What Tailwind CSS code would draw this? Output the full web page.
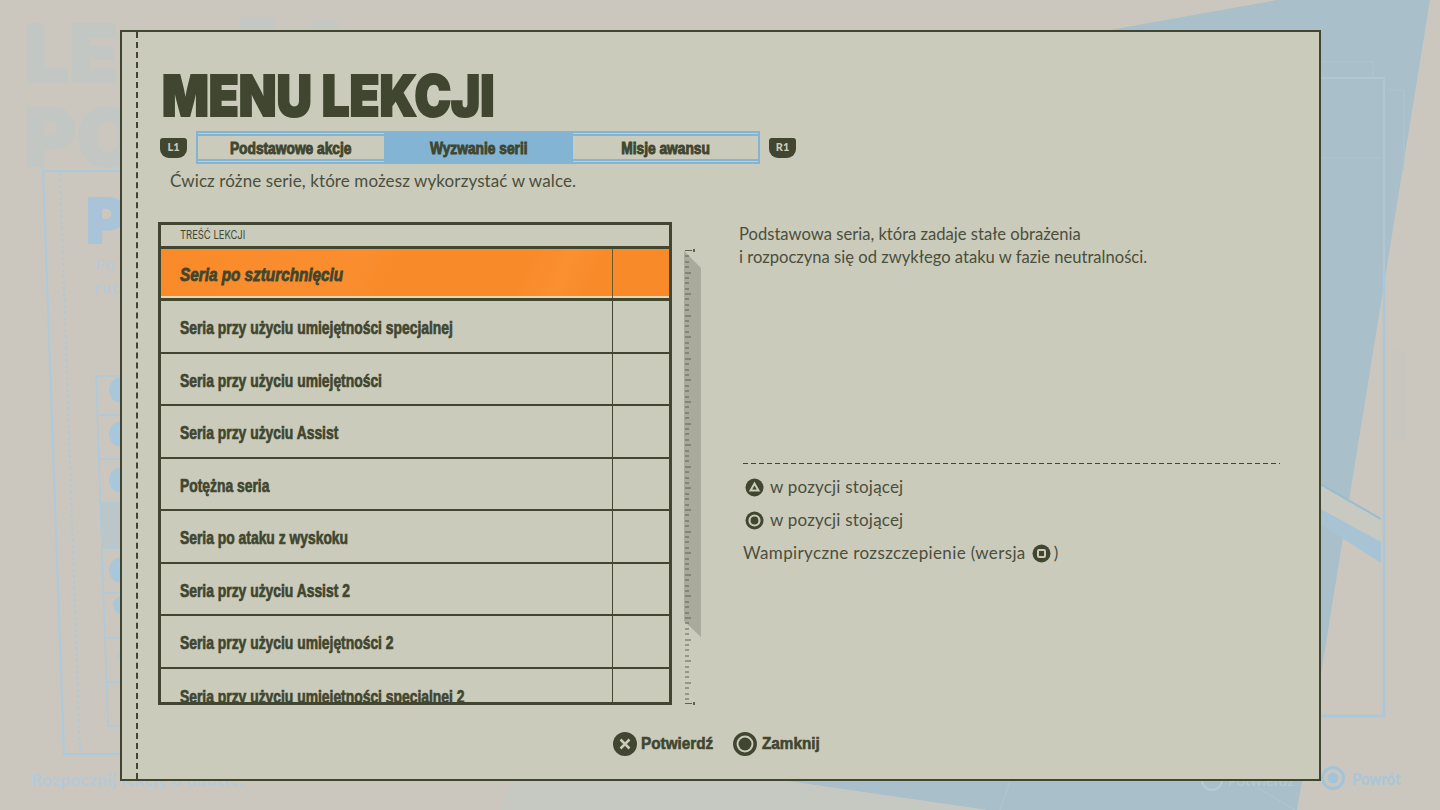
<!DOCTYPE html>
<html lang="pl">

<head>
  <meta charset="UTF-8">
  <title>Menu lekcji</title>
  <script src="https://cdn.jsdelivr.net/npm/@tailwindcss/browser@4"></script>
</head>

<body class="relative w-[1440px] h-[810px] overflow-hidden bg-[#cbc7bf] font-['Lato',sans-serif] text-[#40462f]">
  <!-- dimmed page behind the dialog -->
  <svg class="absolute inset-0" width="1440" height="810" viewBox="0 0 1440 810" fill="none">
    <polygon points="1110,30 1277,0 1430,0 1320,680 1302,781 1297,810 987,810 780,780" fill="#a9bfca" />
    <polygon points="513,780 780,780 987,810 500,810" fill="#c6c8c2" />
    <path d="M1258 788 1295 810M1010 781 1000 810" stroke="#b4c7ce" stroke-width="1" />
    <polygon points="1320,484 1381,519 1381,542 1320,509" fill="#c8c9c0" />
    <polygon points="1320,509 1381,542 1381,563 1320,524" fill="#a8c3d3" />
    <path d="M1320 484 1381 519" stroke="#97bcd2" stroke-width="2" />
    <path d="M1320 78H1384V270" stroke="#b2c7d1" stroke-width="2" />
    <path d="M1384 270V716H1320" stroke="#a9c8db" stroke-width="2.500" />
    <path d="M1320 62H1373V76M1320 158H1380M1389 90H1404V170" stroke="#b0c5cf" stroke-width="1" />
    <rect x="1392" y="350" width="14" height="90" fill="#c8c6bf" />
    <polyline points="121,171 43,171 64,754 121,754" stroke="#abcbdd" stroke-width="2" />
    <polyline points="60,173 80,752" stroke="#abcbdd" stroke-width="2" stroke-dasharray="3 3" />
    <polyline points="121,376 96,376 108,726 121,726" stroke="#abcbdd" stroke-width="1.500" />
    <path d="M98 415H121M100 459H121M101 503H121M103 548H121M104 593H121M105 638H121M106 682H121" stroke="#abcbdd" stroke-width="1.500" />
    <rect x="101" y="504" width="20" height="44" fill="#bbc6c8" />
    <circle cx="122" cy="390" r="13" fill="#a9c7da" />
    <circle cx="122" cy="434" r="13" fill="#a9c7da" />
    <circle cx="122" cy="480" r="13" fill="#a9c7da" />
    <circle cx="122" cy="570" r="13" fill="#a9c7da" />
    <circle cx="122" cy="605" r="9" fill="#a9c7da" />
    <circle cx="122" cy="655" r="5" fill="#b8c9d2" />
    <path d="M240 30V17H275V30M310 30C310 15 340 15 340 30Z" fill="#c4c7c2" />
    <circle cx="1333" cy="778" r="10.500" stroke="#a3c4d8" stroke-width="3" />
    <circle cx="1333" cy="778" r="5.500" fill="#a3c4d8" />
    <circle cx="1212" cy="780" r="10" stroke="#b9cad1" stroke-width="2" />
  </svg>
  <div class="absolute left-[24px] top-[11px] font-['Inter',sans-serif] font-black text-[80px] leading-[84px] text-[#c3c7c3] [-webkit-text-stroke:2px_#c3c7c3]">
    LE<br>PO
  </div>
  <div class="absolute left-[86px] top-[186px] font-['Inter',sans-serif] font-black text-[62px] leading-[70px] text-[#a9c3d8] [-webkit-text-stroke:2px_#a9c3d8]">P</div>
  <div class="absolute left-[95px] top-[252px] text-[16px] leading-[23px] tracking-[1px] text-[#b3cadb]">Po<br>ruc</div>
  <div class="absolute left-[31px] top-[771px] text-[17px] leading-[18px] tracking-[0.4px] font-bold text-[#b3cadb]">Rozpocznij lekcję o dudzie.</div>
  <div class="absolute left-[1352px] top-[770px] text-[16px] leading-[18px] font-black text-[#a9c6d9] origin-left scale-x-[0.92]">Powrót</div>
  <div class="absolute left-[1228px] top-[772px] text-[15px] leading-[16px] text-[#b9cad1]">Potwierdź</div>

  <!-- dialog -->
  <main class="absolute left-[120px] top-[30px] w-[1201px] h-[751px] border-2 border-[#40462f] bg-[#cbcbbb] flex">
    <div class="w-[16px] shrink-0 border-r-2 border-dashed border-[#40462f]"></div>
    <div class="flex-1 flex flex-col pl-[20px] pr-[39px]">
      <h1 class="mt-[30px] ml-[4px] h-[67px] text-[56px] leading-[68px] font-['Inter',sans-serif] font-black [-webkit-text-stroke:2px_#40462f] origin-left scale-x-[0.875] whitespace-nowrap">MENU LEKCJI</h1>

      <div class="flex items-center mt-[2px] ml-[2px]">
        <span class="w-[27px] h-[20px] mr-[9px] rounded-b-[9px] rounded-t-[3px] bg-[#40462f] text-[#cbcbbb] text-[11px] font-black flex items-center justify-center">L1</span>
        <div class="flex w-[564px] h-[33px] border-2 border-[#84b4d3] font-['Liberation_Sans',sans-serif] font-bold text-[16px] [-webkit-text-stroke:0.9px_#40462f]">
          <div class="w-[186px] border-y-2 border-[#84b4d3] my-[1px] pt-[3px] flex items-center justify-center"><span class="scale-x-[0.86] whitespace-nowrap">Podstawowe akcje</span></div>
          <div class="w-[189px] bg-[#84b4d3] pt-[3px] flex items-center justify-center"><span class="scale-x-[0.86] whitespace-nowrap">Wyzwanie serii</span></div>
          <div class="flex-1 border-y-2 border-[#84b4d3] my-[1px] pt-[3px] flex items-center justify-center"><span class="scale-x-[0.86] whitespace-nowrap">Misje awansu</span></div>
        </div>
        <span class="w-[27px] h-[20px] ml-[9px] rounded-b-[9px] rounded-t-[3px] bg-[#40462f] text-[#cbcbbb] text-[11px] font-black flex items-center justify-center">R1</span>
      </div>

      <p class="mt-[5px] ml-[12px] text-[17px] leading-[24px] tracking-[0.1px] text-[#4a4f3c]">Ćwicz różne serie, które możesz wykorzystać w walce.</p>

      <div class="flex mt-[29px]">
        <!-- lesson table -->
        <div class="w-[514px] h-[483px] border-[3px] border-[#40462f] overflow-hidden font-['Liberation_Sans',sans-serif] font-bold text-[19px] [-webkit-text-stroke:0.7px_#40462f]">
          <div class="h-[24px] pl-[19px] flex items-center border-b-[3px] border-[#40462f] font-['Inter',sans-serif] font-normal text-[11.500px] [-webkit-text-stroke:0px]"><span class="scale-x-[0.82] origin-left whitespace-nowrap">TREŚĆ LEKCJI</span></div>
          <div class="h-[52px] flex bg-[linear-gradient(115deg,#f98a2a_0%,#fa8e2e_38%,#f98a2a_45%,#f98a2a_70%,#fa9031_78%,#f98a2a_84%)] border-b-[3px] border-[#40462f] italic shadow-[inset_0_-2px_0_#e8d8b0]">
            <div class="w-[452px] pl-[19px] pt-[4px] flex items-center border-r border-[#6b5a2a]"><span class="scale-x-[0.805] origin-left whitespace-nowrap [-webkit-text-stroke:0.8px_#40462f]">Seria po szturchnięciu</span></div>
          </div>
          <div class="h-[52.500px] flex border-b-2 border-[#40462f]"><div class="w-[452px] pl-[19px] pt-[4px] flex items-center border-r border-[#40462f]"><span class="scale-x-[0.73] origin-left whitespace-nowrap">Seria przy użyciu umiejętności specjalnej</span></div></div>
          <div class="h-[52.500px] flex border-b-2 border-[#40462f]"><div class="w-[452px] pl-[19px] pt-[4px] flex items-center border-r border-[#40462f]"><span class="scale-x-[0.73] origin-left whitespace-nowrap">Seria przy użyciu umiejętności</span></div></div>
          <div class="h-[52.500px] flex border-b-2 border-[#40462f]"><div class="w-[452px] pl-[19px] pt-[4px] flex items-center border-r border-[#40462f]"><span class="scale-x-[0.73] origin-left whitespace-nowrap">Seria przy użyciu Assist</span></div></div>
          <div class="h-[52.500px] flex border-b-2 border-[#40462f]"><div class="w-[452px] pl-[19px] pt-[4px] flex items-center border-r border-[#40462f]"><span class="scale-x-[0.73] origin-left whitespace-nowrap">Potężna seria</span></div></div>
          <div class="h-[52.500px] flex border-b-2 border-[#40462f]"><div class="w-[452px] pl-[19px] pt-[4px] flex items-center border-r border-[#40462f]"><span class="scale-x-[0.73] origin-left whitespace-nowrap">Seria po ataku z wyskoku</span></div></div>
          <div class="h-[52.500px] flex border-b-2 border-[#40462f]"><div class="w-[452px] pl-[19px] pt-[4px] flex items-center border-r border-[#40462f]"><span class="scale-x-[0.73] origin-left whitespace-nowrap">Seria przy użyciu Assist 2</span></div></div>
          <div class="h-[52.500px] flex border-b-2 border-[#40462f]"><div class="w-[452px] pl-[19px] pt-[4px] flex items-center border-r border-[#40462f]"><span class="scale-x-[0.73] origin-left whitespace-nowrap">Seria przy użyciu umiejętności 2</span></div></div>
          <div class="h-[52.500px] flex"><div class="w-[452px] pl-[19px] pt-[4px] flex items-center border-r border-[#40462f]"><span class="scale-x-[0.73] origin-left whitespace-nowrap">Seria przy użyciu umiejętności specjalnej 2</span></div></div>
        </div>

        <!-- scrollbar -->
        <svg class="ml-[10px] mt-[27px] shrink-0" width="20" height="458" viewBox="0 0 20 458" fill="none">
          <polygon points="2,2 19,19 19,388 2,372" fill="#a9aa9c" />
          <path d="M3 1.500H10M3 454.500H10" stroke="#5f6252" stroke-width="1" />
          <rect x="11" y="0" width="2" height="3" fill="#5f6252" />
          <rect x="11" y="453" width="2" height="3" fill="#5f6252" />
          <path d="M3 7H7M3 13H7M3 18H7M3 24H9M3 29H7M3 34H7M3 40H7M3 45H9M3 50H7M3 56H7M3 61H7M3 67H9M3 72H7M3 77H7M3 83H7M3 88H9M3 94H7M3 99H7M3 104H7M3 110H9M3 115H7M3 121H7M3 126H7M3 131H9M3 137H7M3 142H7M3 148H7M3 153H9M3 158H7M3 164H7M3 169H7M3 175H9M3 180H7M3 185H7M3 191H7M3 196H9M3 202H7M3 207H7M3 212H7M3 218H9M3 223H7M3 229H7M3 234H7M3 239H9M3 245H7M3 250H7M3 256H7M3 261H9M3 266H7M3 272H7M3 277H7M3 283H9M3 288H7M3 293H7M3 299H7M3 304H9M3 310H7M3 315H7M3 320H7M3 326H9M3 331H7M3 337H7M3 342H7M3 347H9M3 353H7M3 358H7M3 364H7M3 369H9M3 374H7M3 380H7M3 385H7M3 391H9M3 396H7M3 401H7M3 407H7M3 412H9M3 418H7M3 423H7M3 428H7M3 434H9M3 439H7M3 445H7M3 450H7" stroke="#5f6252" stroke-width="1" />
        </svg>

        <!-- description -->
        <div class="ml-[37px] flex-1 flex flex-col">
          <p class="mt-[1px] text-[16.600px] leading-[22.500px] text-[#4a4f3c] whitespace-nowrap">Podstawowa seria, która zadaje stałe obrażenia<br>i rozpoczyna się od zwykłego ataku w fazie neutralności.</p>
          <div class="mt-[195px] ml-[4px] h-[1px] bg-[repeating-linear-gradient(90deg,#40462f_0_5px,transparent_5px_8px)]"></div>
          <div class="mt-[11px] ml-[4px] flex flex-col gap-[9px] text-[17px] leading-[24px] tracking-[0.2px] text-[#4a4f3c]">
            <div class="flex items-center gap-[6px]">
              <svg class="ml-[2px]" width="19" height="19" viewBox="0 0 19 19"><circle cx="9.500" cy="9.500" r="9" fill="#40462f" /><path d="M9.500 5.500 13.500 12.500H5.500Z" fill="none" stroke="#cbcbbb" stroke-width="2" /></svg>
              <span>w pozycji stojącej</span>
            </div>
            <div class="flex items-center gap-[6px]">
              <svg class="ml-[2px]" width="19" height="19" viewBox="0 0 19 19"><circle cx="9.500" cy="9.500" r="9" fill="#40462f" /><circle cx="9.500" cy="9.500" r="5" fill="none" stroke="#cbcbbb" stroke-width="2.200" /></svg>
              <span>w pozycji stojącej</span>
            </div>
            <div class="flex items-center gap-[6px]">
              <span class="tracking-[0.36px]">Wampiryczne rozszczepienie (wersja</span>
              <svg width="19" height="19" viewBox="0 0 19 19"><circle cx="9.500" cy="9.500" r="9" fill="#40462f" /><rect x="6" y="6" width="7" height="7" rx="1" fill="none" stroke="#cbcbbb" stroke-width="2" /></svg>
              <span class="-ml-[3px]">)</span>
            </div>
          </div>
        </div>
      </div>

      <!-- button hints -->
      <div class="mt-[24px] ml-[455px] flex items-center font-['Liberation_Sans',sans-serif] font-bold text-[17px] [-webkit-text-stroke:0.6px_#40462f]">
        <svg width="24" height="24" viewBox="0 0 24 24"><circle cx="12" cy="12" r="12" fill="#40462f" /><path d="M7.500 7.500l9 9M16.500 7.500l-9 9" stroke="#cbcbbb" stroke-width="2.500" /></svg>
        <span class="ml-[4px] w-[92px] whitespace-nowrap scale-x-[0.9] origin-left">Potwierdź</span>
        <svg width="24" height="24" viewBox="0 0 24 24"><circle cx="12" cy="12" r="10.200" fill="none" stroke="#40462f" stroke-width="3.500" /><circle cx="12" cy="12" r="6.500" fill="#40462f" /></svg>
        <span class="ml-[5px] whitespace-nowrap scale-x-[0.9] origin-left">Zamknij</span>
      </div>
    </div>
  </main>
</body>

</html>
